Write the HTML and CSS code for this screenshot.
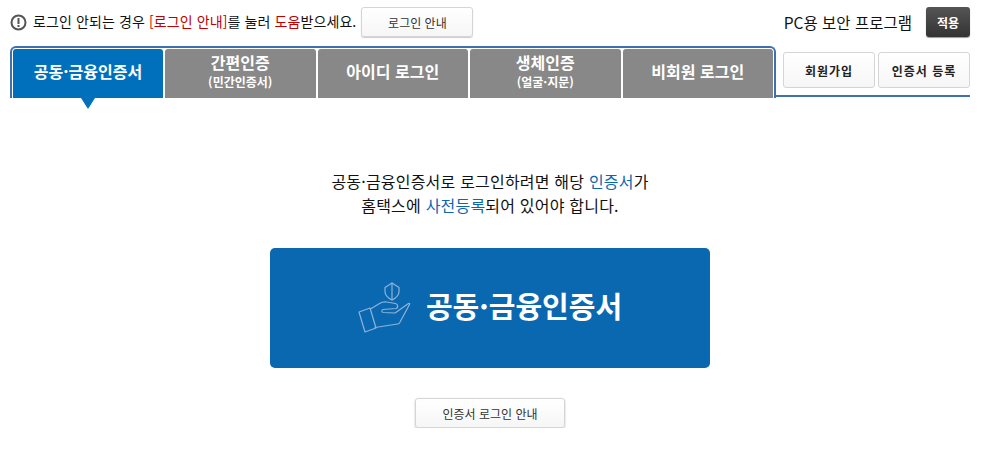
FILE: index.html
```html
<!DOCTYPE html>
<html lang="ko">
<head>
    <meta charset="UTF-8">
    <meta name="viewport" content="width=device-width, initial-scale=1.0">
    <title>공동·금융인증서 로그인</title>
    <link rel="stylesheet" href="styles.css">
</head>
<body>
    <div class="top-bar">
        <div class="notice">
            <svg class="notice-icon" width="17" height="17" viewBox="0 0 17 17">
                <circle cx="8.5" cy="8.5" r="7" fill="none" stroke="#555" stroke-width="2"/>
                <rect x="7.5" y="4" width="2" height="6" fill="#555"/>
                <rect x="7.5" y="11" width="2" height="2" fill="#555"/>
            </svg>
            <span class="notice-text">로그인 안되는 경우 <b class="red">[로그인 안내]</b>를 눌러 <b class="red">도움</b>받으세요.</span>
            <button class="btn btn-guide">로그인 안내</button>
        </div>
        <div class="security">
            <span class="security-label">PC용 보안 프로그램</span>
            <button class="btn-dark">적용</button>
        </div>
    </div>

    <div class="tab-bar">
        <div class="tabs">
            <div class="tab active">공동·금융인증서</div>
            <div class="tab">간편인증<small>(민간인증서)</small></div>
            <div class="tab">아이디 로그인</div>
            <div class="tab">생체인증<small>(얼굴·지문)</small></div>
            <div class="tab">비회원 로그인</div>
        </div>
        <div class="tab-side">
            <button class="btn btn-side">회원가입</button>
            <button class="btn btn-side">인증서 등록</button>
        </div>
    </div>

    <div class="content">
        <p class="message">공동·금융인증서로 로그인하려면 해당 <span class="blue">인증서</span>가<br>홈택스에 <span class="blue">사전등록</span>되어 있어야 합니다.</p>
        <button class="cert-btn">
            <svg class="cert-icon" width="54" height="52" viewBox="0 0 54 52" fill="none" stroke="#8fb3d6" stroke-width="1.2" stroke-linejoin="round" stroke-linecap="round">
                <path d="M34 1 l7 4.500 v4 c0 3.500 -3 6.500 -7 8.500 c-4 -2 -7 -5 -7 -8.500 v-4 z"/>
                <path d="M34 1 v17"/>
                <path d="M1 30 l11 -4 l6 20 l-11 4 z"/>
                <path d="M12.500 27 l9 -5.500 c2 -1.200 4.500 -1.700 7 -1.500 l9 1.500 c2.500 0.500 3 4.500 0.500 5 l-13 1 c-1.500 0.300 -1.500 2.500 0 3 l12 0.500 l13.500 -9.500 c0.800 -0.500 1.500 0.200 1 1 l-10 18.500 c-0.500 0.800 -1 1 -2 1 l-22.500 3.500"/>
            </svg>
            <span class="cert-label">공동·금융인증서</span>
        </button>
        <button class="btn btn-cert-guide">인증서 로그인 안내</button>
    </div>
</body>
</html>
```

FILE: styles.css
```css
* { box-sizing: border-box; }

body {
    margin: 0;
    background: #fff;
    color: #111;
    font-family: "Noto Sans CJK KR", "Noto Sans", sans-serif;
    font-size: 14px;
}

button {
    font-family: inherit;
    cursor: pointer;
}

b { font-weight: 400; }
.red { color: #c00000; }
.blue { color: #0a68b1; }

.btn {
    background: linear-gradient(#fff, #f6f6f6);
    border: 1px solid #d5d5d5;
    border-radius: 3px;
    color: #333;
    font-size: 12px;
    padding: 0;
}

.top-bar {
    display: flex;
    justify-content: space-between;
    align-items: center;
    width: 960px;
    height: 30px;
    margin: 7px 0 0 10px;
}
.notice {
    display: flex;
    align-items: center;
}
.notice-icon { margin-right: 6px; }
.notice-text {
    letter-spacing: 0.1px;
    padding-bottom: 2px;
}
.btn-guide {
    width: 112px;
    height: 30px;
    margin-left: 5px;
    box-shadow: 0 1px 1px #ccc;
}
.security {
    display: flex;
    align-items: center;
}
.security-label {
    font-size: 15.5px;
    margin-right: 14px;
}
.btn-dark {
    width: 44px;
    height: 30px;
    background: linear-gradient(#555, #333);
    border: 0;
    border-radius: 3px;
    box-shadow: 0 1px 1px #999;
    color: #fff;
    font-size: 12px;
    font-weight: 700;
    padding: 0;
}

.tab-bar {
    display: flex;
    width: 960px;
    height: 52px;
    margin: 9px 0 0 10px;
}
.tabs {
    display: flex;
    gap: 2px;
    width: 766px;
    padding: 1px 1px 0 1px;
    border: 2px solid #3e70ae;
    border-bottom: 0;
    border-radius: 6px 6px 0 0;
}
.tab {
    position: relative;
    flex: 1;
    display: flex;
    flex-direction: column;
    align-items: center;
    justify-content: center;
    padding-bottom: 5px;
    background: #888;
    border-radius: 3px 3px 0 0;
    color: #fff;
    font-size: 16px;
    font-weight: 700;
    line-height: 19px;
}
.tab small {
    margin-top: 3px;
    font-size: 12px;
    line-height: 14px;
}
.tab.active {
    flex: 0 0 150px;
    background: #0070bc;
}
.tab.active::after {
    content: "";
    position: absolute;
    left: 68px;
    top: 100%;
    border-top: 11px solid #0070bc;
    border-left: 7px solid transparent;
    border-right: 7px solid transparent;
}
.tab-side {
    flex: 1;
    display: flex;
    justify-content: flex-end;
    gap: 3px;
    padding-top: 6px;
    height: 51px;
    border-bottom: 2px solid #3e70ae;
}
.btn-side {
    width: 92px;
    height: 36px;
    color: #222;
    font-weight: 700;
    letter-spacing: 1px;
}

.content {
    display: flex;
    flex-direction: column;
    align-items: center;
    width: 980px;
}
.message {
    margin: 71px 0 0;
    font-size: 16px;
    line-height: 24px;
    letter-spacing: 0.2px;
    text-align: center;
}
.cert-btn {
    display: flex;
    align-items: center;
    justify-content: center;
    gap: 14px;
    width: 440px;
    height: 120px;
    margin-top: 31px;
    background: #0a68b1;
    border: 0;
    border-radius: 5px;
    color: #fff;
    font-size: 29px;
    font-weight: 700;
    padding: 0;
}
.cert-label { padding-bottom: 6px; }
.btn-cert-guide {
    width: 150px;
    height: 30px;
    margin-top: 30px;
    box-shadow: 0 1px 2px #bbb;
}
```
